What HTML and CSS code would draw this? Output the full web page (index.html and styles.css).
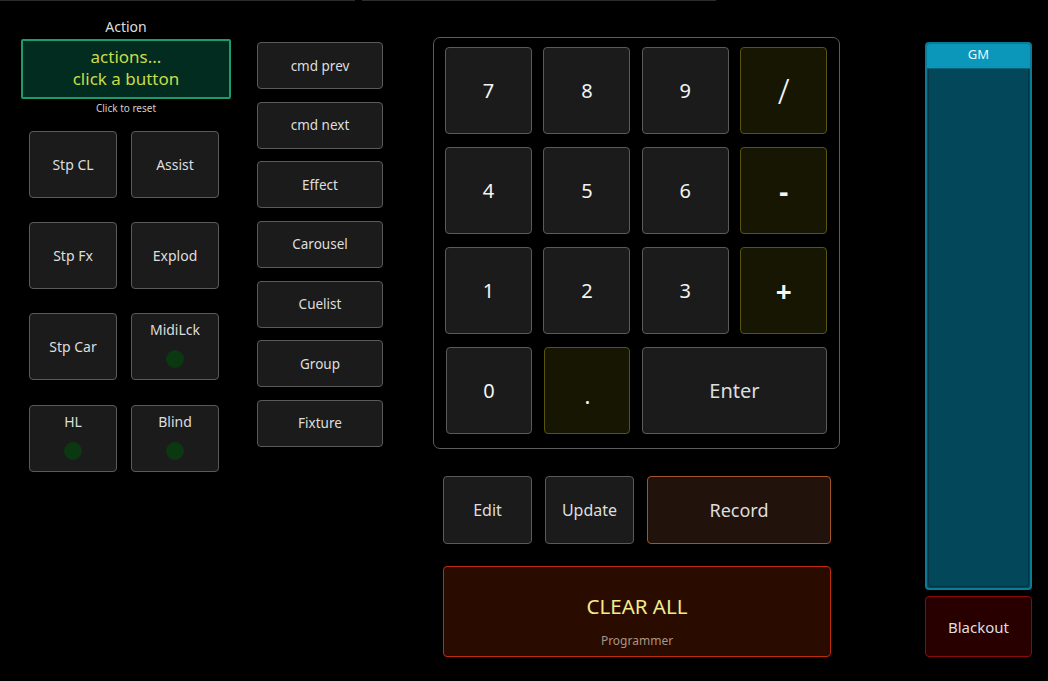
FILE: index.html
```html
<!DOCTYPE html>
<html>
<head>
<meta charset="utf-8">
<link rel="stylesheet" href="styles.css">
</head>
<body>
<div class="topbar"><div class="seg seg1"></div><div class="seg seg2"></div></div>
<div class="main">
  <div class="col-left">
    <div class="action-label">Action</div>
    <div class="action-box">actions...<br>click a button</div>
    <div class="caption">Click to reset</div>
    <div class="small-grid">
      <div class="btn sq">Stp CL</div>
      <div class="btn sq">Assist</div>
      <div class="btn sq">Stp Fx</div>
      <div class="btn sq">Explod</div>
      <div class="btn sq">Stp Car</div>
      <div class="btn sq led-btn"><span>MidiLck</span><i class="led"></i></div>
      <div class="btn sq led-btn"><span>HL</span><i class="led"></i></div>
      <div class="btn sq led-btn"><span>Blind</span><i class="led"></i></div>
    </div>
  </div>
  <div class="col-mid">
    <div class="btn wide">cmd prev</div>
    <div class="btn wide">cmd next</div>
    <div class="btn wide">Effect</div>
    <div class="btn wide">Carousel</div>
    <div class="btn wide">Cuelist</div>
    <div class="btn wide">Group</div>
    <div class="btn wide">Fixture</div>
  </div>
  <div class="col-center">
    <div class="keypad">
      <div class="btn key">7</div>
      <div class="btn key">8</div>
      <div class="btn key">9</div>
      <div class="btn key op slash">/</div>
      <div class="btn key">4</div>
      <div class="btn key">5</div>
      <div class="btn key">6</div>
      <div class="btn key op big">-</div>
      <div class="btn key">1</div>
      <div class="btn key">2</div>
      <div class="btn key">3</div>
      <div class="btn key op big">+</div>
      <div class="btn key zero">0</div>
      <div class="btn key op dot">.</div>
      <div class="btn key enter">Enter</div>
    </div>
    <div class="actions">
      <div class="btn act">Edit</div>
      <div class="btn act">Update</div>
      <div class="btn act record">Record</div>
    </div>
    <div class="btn clear"><span class="clear-title">CLEAR ALL</span><span class="clear-sub">Programmer</span></div>
  </div>
  <div class="col-right">
    <div class="fader">
      <div class="fader-head">GM</div>
      <div class="fader-body"></div>
    </div>
    <div class="btn blackout">Blackout</div>
  </div>
</div>
</body>
</html>
```
FILE: styles.css
```css
* { box-sizing: border-box; }
html, body { margin: 0; padding: 0; }
body {
  background: #000;
  width: 1048px;
  height: 681px;
  overflow: hidden;
  font-family: "Noto Sans", "Open Sans", sans-serif;
  color: #dedede;
}
.topbar {
  display: flex;
  gap: 7px;
  height: 2px;
}
.seg { height: 1px; background: #2c2c2c; }
.seg1 { width: 355px; }
.seg2 { width: 354px; }

.main {
  display: flex;
  padding-left: 21px;
}
.btn {
  background: #1b1b1b;
  border: 1.5px solid #5a5a5a;
  border-radius: 4px;
  display: flex;
  align-items: center;
  justify-content: center;
  color: #dedede;
}

/* left column */
.col-left {
  width: 210px;
  margin-top: 15px;
  display: flex;
  flex-direction: column;
  align-items: center;
}
.action-label {
  font-size: 14px;
  line-height: 20px;
  color: #dedede;
}
.action-box {
  margin-top: 2px;
  width: 210px;
  height: 60px;
  background: #022c1f;
  border: 2px solid #1f9a6c;
  border-radius: 2px;
  color: #c9dc4a;
  font-size: 17px;
  line-height: 22px;
  text-align: center;
  padding-top: 5px;
}
.caption {
  font-size: 10px;
  line-height: 14px;
  margin-top: 2px;
  color: #cfcfcf;
}
.small-grid {
  align-self: flex-start;
  margin-left: 8px;
  margin-top: 16px;
  display: grid;
  grid-template-columns: 88px 88px;
  grid-auto-rows: 67px;
  column-gap: 14px;
  row-gap: 24.2px;
}
.sq { font-size: 14px; }
.led-btn {
  flex-direction: column;
  justify-content: flex-start;
  padding-top: 6px;
}
.led-btn span { line-height: 20px; }
.led {
  display: block;
  width: 18px;
  height: 18px;
  border-radius: 50%;
  background: #0b3810;
  margin-top: 10px;
}

/* middle column */
.col-mid {
  margin-left: 26px;
  margin-top: 40px;
  width: 126px;
  display: flex;
  flex-direction: column;
  gap: 12.67px;
}
.wide {
  height: 47px;
  font-size: 13.5px;
}

/* center */
.col-center {
  margin-left: 50px;
  margin-top: 35px;
  width: 406px;
  display: flex;
  flex-direction: column;
}
.keypad {
  width: 407px;
  height: 412px;
  border: 1.5px solid #5c5c5c;
  border-radius: 7px;
  padding: 9px 11px 13px 11px;
  display: grid;
  grid-template-columns: repeat(4, 87px);
  grid-template-rows: repeat(4, 87px);
  column-gap: 11.4px;
  row-gap: 13px;
}
.key {
  font-size: 20px;
  color: #f4f4f4;
}
.op {
  background: #161603;
  border-color: #57540f;
}
.slash { font-size: 34px; font-weight: 300; }
.big { font-size: 28px; font-weight: 700; }
.dot { font-size: 22px; padding-top: 8px; margin-left: 1px; }
.zero { margin-left: 1px; }
.enter {
  grid-column: span 2;
  color: #dedede;
}
.actions {
  margin-top: 27px;
  margin-left: 10px;
  display: flex;
  gap: 13px;
}
.act {
  width: 89px;
  height: 68px;
  font-size: 16px;
}
.record {
  width: 184px;
  background: #21130c;
  border-color: #a4532a;
  font-size: 18px;
}
.clear {
  margin-top: 22px;
  margin-left: 10px;
  width: 388px;
  height: 91px;
  background: #2a0b00;
  border-color: #c22a0c;
  flex-direction: column;
  justify-content: flex-start;
  padding-top: 26px;
}
.clear-title {
  color: #f2ec8c;
  font-size: 20.5px;
  line-height: 26px;
}
.clear-sub {
  color: #a89582;
  font-size: 12px;
  line-height: 16px;
  margin-top: 14px;
}

/* right */
.col-right {
  margin-left: 86px;
  margin-top: 40px;
  width: 107px;
  display: flex;
  flex-direction: column;
}
.fader {
  height: 548px;
  border: 2px solid #0a7c97;
  border-radius: 4px;
  background: #02475a;
  display: flex;
  flex-direction: column;
  overflow: hidden;
}
.fader-head {
  height: 25px;
  background: #0b97ba;
  color: #e6f6fa;
  font-size: 13px;
  text-align: center;
  line-height: 21px;
  border-bottom: 1px solid #07627a;
}
.fader-body {
  flex: 1;
  margin: 0 1px 1px 1px;
  border: 1px solid #013644;
  border-top: none;
  border-radius: 0 0 4px 4px;
}
.blackout {
  margin-top: 6px;
  height: 61px;
  background: #290000;
  border-color: #8c0a0a;
  font-size: 15px;
}
```
